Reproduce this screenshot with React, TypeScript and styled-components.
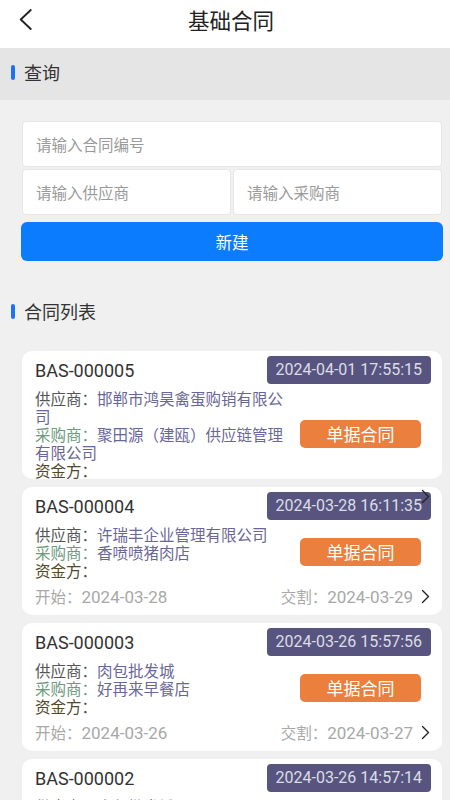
import styled, { createGlobalStyle } from 'styled-components'

const GlobalStyle = createGlobalStyle`
    html, body {
        margin: 0;
        padding: 0;
        overflow: hidden;
        background: #f0f0f0;
    }
    body {
        font-family: Roboto, 'Noto Sans CJK SC', sans-serif;
    }
    * { box-sizing: border-box; }
`

type Contract = {
    code: string
    created: string
    supplier: string
    buyer: string
    start?: string
    delivery?: string
}

const contracts: Contract[] = [
    {
        code: 'BAS-000005',
        created: '2024-04-01 17:55:15',
        supplier: '邯郸市鸿昊禽蛋购销有限公司',
        buyer: '聚田源（建瓯）供应链管理有限公司',
        start: '2024-04-01',
        delivery: '2024-04-02',
    },
    {
        code: 'BAS-000004',
        created: '2024-03-28 16:11:35',
        supplier: '许瑞丰企业管理有限公司',
        buyer: '香喷喷猪肉店',
        start: '2024-03-28',
        delivery: '2024-03-29',
    },
    {
        code: 'BAS-000003',
        created: '2024-03-26 15:57:56',
        supplier: '肉包批发城',
        buyer: '好再来早餐店',
        start: '2024-03-26',
        delivery: '2024-03-27',
    },
    {
        code: 'BAS-000002',
        created: '2024-03-26 14:57:14',
        supplier: '肉包批发城',
        buyer: '好再来早餐店',
        start: '2024-03-26',
        delivery: '2024-03-27',
    },
]

const Chevron = ({ dir }: { dir: 'left' | 'right' }) => (
    <svg width='100%' height='100%' viewBox='0 0 12 20' fill='none'>
        {dir == 'left'
            ? <path d='M11 1L1.5 10L11 19' stroke='#222' strokeWidth='1.8' strokeLinecap='round' strokeLinejoin='round' />
            : <path d='M2 2L10 10L2 18' stroke='#222' strokeWidth='1.8' strokeLinecap='round' strokeLinejoin='round' />}
    </svg>
)

export default function App() {
    return (
        <Page>
            <GlobalStyle />
            <Header>
                <BackButton><Chevron dir='left' /></BackButton>
                <Title>基础合同</Title>
            </Header>

            <SectionBar>
                <Marker />
                查询
            </SectionBar>

            <QueryPanel>
                <Field placeholder='请输入合同编号' />
                <FieldRow>
                    <Field placeholder='请输入供应商' />
                    <Field placeholder='请输入采购商' />
                </FieldRow>
                <CreateButton>新建</CreateButton>
            </QueryPanel>

            <ListTitle>
                <Marker />
                合同列表
            </ListTitle>

            <List>
                {contracts.map((c) => (
                    <Card key={c.code}>
                        <Clip>
                            <CardHead>
                                <Code>{c.code}</Code>
                                <Stamp>{c.created}</Stamp>
                            </CardHead>
                            <CardBody>
                                <Info>
                                    <div>
                                        <Label $tone='supplier'>供应商：</Label>
                                        <Value>{c.supplier}</Value>
                                    </div>
                                    <div>
                                        <Label $tone='buyer'>采购商：</Label>
                                        <Value>{c.buyer}</Value>
                                    </div>
                                    <div>
                                        <Label $tone='fund'>资金方：</Label>
                                    </div>
                                </Info>
                                <TypeTag>单据合同</TypeTag>
                            </CardBody>
                            <CardFoot>
                                <span>开始：<DateText>{c.start}</DateText></span>
                                <FootRight>
                                    交割：<DateText>{c.delivery}</DateText>
                                    {/* escapes the clip on purpose, like the app does */}
                                    <Arrow><Chevron dir='right' /></Arrow>
                                </FootRight>
                            </CardFoot>
                        </Clip>
                    </Card>
                ))}
            </List>
        </Page>
    )
}

const Page = styled.div`
    width: 450px;
    height: 800px;
    overflow: hidden;
    background: #f0f0f0;
`

const Header = styled.header`
    position: relative;
    height: 48px;
    background: #fff;
    display: flex;
    align-items: center;
    justify-content: center;
`

const BackButton = styled.div`
    position: absolute;
    left: 19px;
    top: 9px;
    width: 13px;
    height: 21px;
    display: flex;
`

const Title = styled.h1`
    margin: 0 0 10px 12px;
    font-family: 'Noto Sans CJK SC', sans-serif;
    font-size: 21.5px;
    font-weight: 400;
    color: #222;
`

const Marker = styled.i`
    display: block;
    width: 4px;
    height: 15px;
    border-radius: 2px;
    background: #1b73f0;
    margin-right: 9px;
`

const SectionBar = styled.div`
    height: 52px;
    background: #e5e5e5;
    display: flex;
    align-items: center;
    padding: 0 0 4px 11px;
    font-family: 'Noto Sans CJK SC', sans-serif;
    font-size: 18px;
    color: #333;
`

const QueryPanel = styled.div`
    display: flex;
    flex-direction: column;
    gap: 2px;
    padding: 21px 8px 0 22px;
`

const FieldRow = styled.div`
    display: flex;
    gap: 2px;
    & > * { flex: 1 1 0; }
`

const Field = styled.input`
    display: block;
    min-width: 0;
    width: 100%;
    height: 46px;
    border: 1px solid #e6e6e6;
    border-radius: 4px;
    background: #fff;
    padding: 0 13px;
    font-family: 'Noto Sans CJK SC', sans-serif;
    font-size: 15.5px;
    outline: none;
    &::placeholder { color: #9a9a9a; }
`

const CreateButton = styled.button`
    margin: 5px -1px 0 -1px;
    height: 39px;
    border: none;
    border-radius: 6px;
    background: #0a7cfd;
    color: #fff;
    font-family: 'Noto Sans CJK SC', sans-serif;
    font-size: 16.5px;
`

const ListTitle = styled.div`
    height: 90px;
    display: flex;
    align-items: center;
    padding: 10px 0 0 11px;
    font-family: 'Noto Sans CJK SC', sans-serif;
    font-size: 18px;
    color: #333;
`

const List = styled.div`
    display: flex;
    flex-direction: column;
    gap: 8px;
    padding: 0 8px 0 22px;
`

const Card = styled.div`
    position: relative;
    flex: none;
    height: 128px;
    background: #fff;
    border-radius: 10px;
`

const Clip = styled.div`
    height: 100%;
    overflow: hidden;
    padding: 5px 11px 0 13px;
`

const CardHead = styled.div`
    display: flex;
    align-items: center;
    justify-content: space-between;
    height: 28px;
`

const Code = styled.span`
    font-size: 18px;
    color: #333;
`

const Stamp = styled.span`
    height: 28px;
    line-height: 28px;
    padding: 0 9px;
    border-radius: 4px;
    background: #57557f;
    color: #dcdce8;
    font-size: 16px;
`

const CardBody = styled.div`
    display: flex;
    align-items: center;
    margin-top: 5px;
`

const Info = styled.div`
    flex: none;
    width: 252px;
    font-family: 'Noto Sans CJK SC', sans-serif;
    font-size: 15.5px;
    line-height: 18px;
`

const Label = styled.span<{ $tone: 'supplier' | 'buyer' | 'fund' }>`
    color: ${(p) => (p.$tone == 'supplier' ? '#555' : p.$tone == 'buyer' ? '#6d9a7e' : '#4f4a2e')};
`

const Value = styled.span`
    color: #6a6796;
`

const TypeTag = styled.div`
    flex: none;
    margin: 0 10px 0 auto;
    width: 121px;
    height: 28px;
    line-height: 28px;
    text-align: center;
    border-radius: 5px;
    background: #ea7f3e;
    color: #fff;
    font-family: 'Noto Sans CJK SC', sans-serif;
    font-size: 17px;
`

const CardFoot = styled.div`
    display: flex;
    justify-content: space-between;
    margin-top: 8px;
    line-height: 18px;
    font-family: 'Noto Sans CJK SC', sans-serif;
    font-size: 15.5px;
    color: #a8a8a8;
`

const DateText = styled.span`
    font-family: Roboto, sans-serif;
    font-size: 17px;
`

const FootRight = styled.span`
    padding-right: 18px;
`

const Arrow = styled.span`
    position: absolute;
    z-index: 1;
    right: 12px;
    width: 9px;
    height: 15px;
    margin-top: 2px;
    display: inline-flex;
`
